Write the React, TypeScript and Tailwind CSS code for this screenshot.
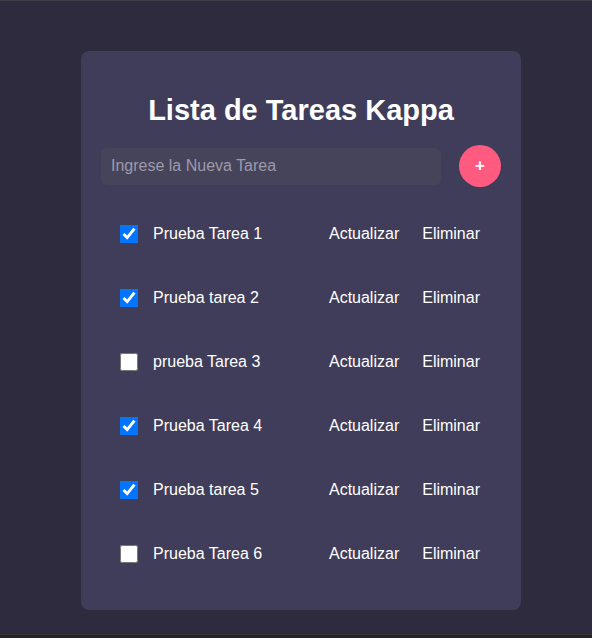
import { useState } from "react";

const initialTasks = [
  { id: 1, text: "Prueba Tarea 1", done: true },
  { id: 2, text: "Prueba tarea 2", done: true },
  { id: 3, text: "prueba Tarea 3", done: false },
  { id: 4, text: "Prueba Tarea 4", done: true },
  { id: 5, text: "Prueba tarea 5", done: true },
  { id: 6, text: "Prueba Tarea 6", done: false },
];

export default function App() {
  const [tasks, setTasks] = useState(initialTasks);
  const [draft, setDraft] = useState("");

  const toggle = (id: number) =>
    setTasks((t) => t.map((x) => (x.id === id ? { ...x, done: !x.done } : x)));

  return (
    <div
      className="h-[638px] bg-[#2d2b3d] border-t border-[#3e3e44] flex flex-col"
      style={{ fontFamily: '"Liberation Sans", Arial, sans-serif' }}
    >
      <div className="flex-1">
        <div className="ml-[81px] mt-[50px] w-[440px] h-[559px] rounded-lg bg-[#3f3d5a] px-5 pt-5 text-white">
          <h1 className="mt-[22px] text-center text-[29px] leading-[34px] font-bold">
            Lista de Tareas Kappa
          </h1>
          <div className="mt-[18px] flex items-center gap-[18px]">
            <input
              value={draft}
              onChange={(e) => setDraft(e.target.value)}
              placeholder="Ingrese la Nueva Tarea"
              className="flex-1 h-[37px] rounded-md bg-[#46445a] px-[10px] text-[16px] text-white placeholder:text-[#9c9aab] outline-none"
            />
            <button className="w-[42px] h-[42px] rounded-full bg-[#ff5a7f] text-white text-[17px] font-bold flex items-center justify-center">
              +
            </button>
          </div>
          <ul className="mt-[15px]">
            {tasks.map((t) => (
              <li key={t.id} className="h-[64px] flex items-center pl-[19px] pr-[21px] text-[16px]">
                <input
                  type="checkbox"
                  checked={t.done}
                  onChange={() => toggle(t.id)}
                  className="w-[18px] h-[18px] accent-[#0075ff]"
                />
                <span className="ml-[15px] flex-1">{t.text}</span>
                <button className="text-white">Actualizar</button>
                <button className="ml-[23px] text-white">Eliminar</button>
              </li>
            ))}
          </ul>
        </div>
      </div>
      <div className="h-[4px] border-t border-[#3b3430] bg-[#28252a]" />
    </div>
  );
}
